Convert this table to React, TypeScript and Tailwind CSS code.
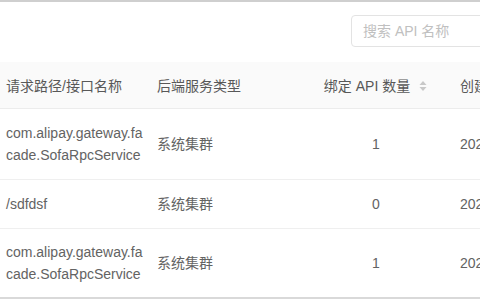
type Row = {
  path: string
  backend: string
  count: number
  created: string
}

const rows: Row[] = [
  { path: "com.alipay.gateway.facade.SofaRpcService", backend: "系统集群", count: 1, created: "2020-03-12" },
  { path: "/sdfdsf", backend: "系统集群", count: 0, created: "2020-03-12" },
  { path: "com.alipay.gateway.facade.SofaRpcService", backend: "系统集群", count: 1, created: "2020-03-12" },
];

const font = { fontFamily: '"Liberation Sans", "Noto Sans CJK SC", sans-serif' };

function SortIcon() {
  return (
    <svg width="8" height="12" viewBox="0 0 8 12" className="fill-[#c8c8c8]">
      <path d="M4 1 L7.5 5 H0.5 Z" />
      <path d="M4 11 L7.5 7 H0.5 Z" />
    </svg>
  );
}

export default function App() {
  return (
    <div className="w-[480px] h-[300px] overflow-hidden bg-white border-t-2 border-[#cfcfcf]" style={font}>
      {/* toolbar */}
      <div className="flex justify-end pt-[13px] h-[60px]">
        <div className="w-[140px] -mr-[11px] h-[32px] border border-[#e3e3e3] rounded-[4px] flex items-center pl-[11px] text-[14px] text-[#c0c0c0]">
          搜索 API 名称
        </div>
      </div>

      {/* table */}
      <div className="w-[520px] text-[14px] leading-[22px] text-[#636363]">
        <div className="grid grid-cols-[151px_159px_132px_1fr] bg-[#fafafa] border-b border-[#ececec] h-[47px] items-center pt-[2px] text-[#585858]">
          <div className="pl-[6px]">请求路径/接口名称</div>
          <div className="pl-[6px]">后端服务类型</div>
          <div className="flex items-center justify-center gap-[9px] pr-[1px]">
            <span>绑定 API 数量</span>
            <SortIcon />
          </div>
          <div className="pl-[18px]">创建时间</div>
        </div>

        {rows.map((r, i) => (
          <div
            key={i}
            className={`grid grid-cols-[151px_159px_132px_1fr] items-center border-b ${
              i === rows.length - 1 ? "border-[#d9d9d9] border-b-2 py-[12px]" : "border-[#efefef] py-[13px]"
            }`}
          >
            <div className="pl-[6px] pr-[3px] break-all">{r.path}</div>
            <div className="pl-[6px]">{r.backend}</div>
            <div className="text-center">{r.count}</div>
            <div className="pl-[18px] whitespace-nowrap">{r.created}</div>
          </div>
        ))}
      </div>
    </div>
  );
}
